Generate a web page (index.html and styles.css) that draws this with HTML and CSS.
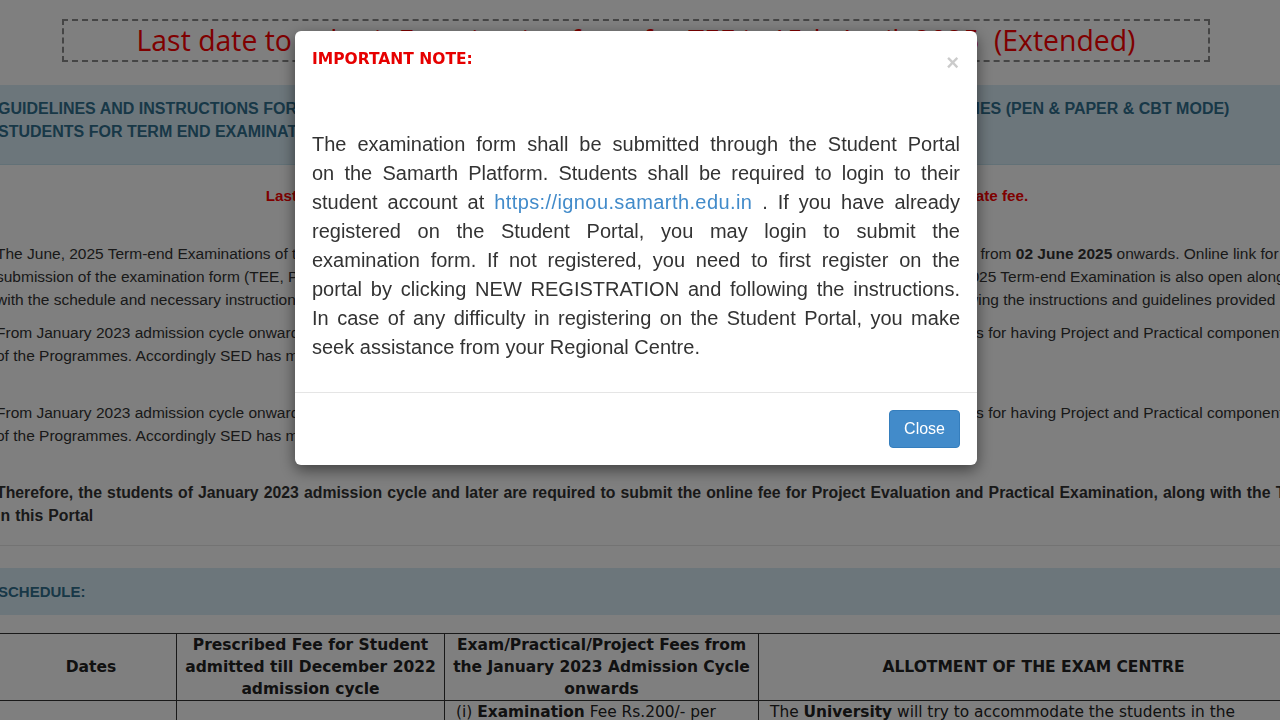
FILE: index.html
```html
<!DOCTYPE html>
<html lang="en">
<head>
<meta charset="utf-8">
<title>IGNOU Examination Form</title>
<link rel="stylesheet" href="styles.css">
</head>
<body>
<div class="page">
  <div class="banner">Last date to submit Examination form for TEE is 15th April, 2025&nbsp; (Extended)</div>

  <div class="band band-top">
    GUIDELINES AND INSTRUCTIONS FOR SUBMISSION OF ONLINE EXAMINATION FORM FOR ODL ONLINE &amp; OTHER PROGRAMMES (PEN &amp; PAPER &amp; CBT MODE)<br>
    STUDENTS FOR TERM END EXAMINATION JUNE 2025
  </div>

  <p class="late">Last date to submit the online Examination Form for the June 2025 TEE is 15th April 2025 without late fee.</p>

  <p class="para p1">The June, 2025 Term-end Examinations of the University for all ODL and Online Programmes will be conducted in Pen &amp; Paper and CBT mode from <b>02 June 2025</b> onwards. Online link for<br>
  submission of the examination form (TEE, Project and Practical Examination Fee) for all the eligible students who wish to appear in the June 2025 Term-end Examination is also open along<br>
  with the schedule and necessary instructions. Students are advised to carefully go through and submit their online examination form after following the instructions and guidelines provided</p>

  <p class="para p2">From January 2023 admission cycle onwards, the University has prescribed separate fees for Project Work and Practical for all the Programmes for having Project and Practical components<br>
  of the Programmes. Accordingly SED has made provision for submission of the fee through this portal.</p>

  <p class="para p3">From January 2023 admission cycle onwards, the University has prescribed separate fees for Project Work and Practical for all the Programmes for having Project and Practical components<br>
  of the Programmes. Accordingly SED has made provision for submission of the fee through this portal.</p>

  <p class="para p4"><b>Therefore, the students of January 2023 admission cycle and later are required to submit the online fee for Project Evaluation and Practical Examination, along with the Term-end Examination form<br>
  in this Portal</b></p>

  <hr class="rule">

  <div class="band band-schedule">SCHEDULE:</div>

  <table class="schedule">
    <colgroup>
      <col class="c1"><col class="c2"><col class="c3"><col class="c4">
    </colgroup>
    <thead>
      <tr>
        <th class="first">Dates</th>
        <th>Prescribed Fee for Student admitted till December 2022 admission cycle</th>
        <th>Exam/Practical/Project Fees from the January 2023 Admission Cycle onwards</th>
        <th>ALLOTMENT OF THE EXAM CENTRE</th>
      </tr>
    </thead>
    <tbody>
      <tr>
        <td class="mid first">02 May 2025 to 15 April 2025</td>
        <td class="mid">Rs.200/- per theory course</td>
        <td class="pad">(i) <b>Examination</b> Fee Rs.200/- per theory course<br>(ii) <b>Practical</b> Fee Rs.300/- per course<br>(iii) <b>Project</b> Fee Rs.500/- per project</td>
        <td class="pad">The <b>University</b> will try to accommodate the students in the examination centre opted by them. However, the University reserves the right to allot any other examination centre.</td>
      </tr>
    </tbody>
  </table>
</div>

<div class="backdrop"></div>

<div class="modal" role="dialog">
  <div class="modal-header">
    <h4 class="modal-title">IMPORTANT NOTE:</h4>
    <button class="close" type="button" aria-label="Close">&times;</button>
  </div>
  <div class="modal-body">
    <p>
      <span class="ln">The examination form shall be submitted through the Student Portal</span>
      <span class="ln">on the Samarth Platform. Students shall be required to login to their</span>
      <span class="ln">student account at <a href="#">https://ignou.samarth.edu.in</a> . If you have already</span>
      <span class="ln">registered on the Student Portal, you may login to submit the</span>
      <span class="ln">examination form. If not registered, you need to first register on the</span>
      <span class="ln">portal by clicking NEW REGISTRATION and following the instructions.</span>
      <span class="ln">In case of any difficulty in registering on the Student Portal, you make</span>
      <span class="ln last">seek assistance from your Regional Centre.</span>
    </p>
  </div>
  <div class="modal-footer">
    <button class="btn-primary" type="button">Close</button>
  </div>
</div>
</body>
</html>
```

FILE: styles.css
```css
html, body {
  margin: 0;
  padding: 0;
  width: 1280px;
  height: 720px;
  overflow: hidden;
  background: #ffffff;
}

body {
  font-family: "Liberation Sans", Arial, sans-serif;
  color: #333333;
}

.page {
  margin-left: -4px;
  width: 1340px;
  padding-top: 19px;
}

.banner {
  margin-left: 66px;
  width: 1144px;
  height: 39px;
  border: 2px dashed #8a8a8a;
  color: #ff0000;
  font-family: "Open Sans", "Liberation Sans", sans-serif;
  font-size: 28.4px;
  line-height: 39px;
  text-align: center;
  white-space: nowrap;
  overflow: hidden;
}

.band {
  background: #d9edf7;
  border-bottom: 1px solid #c4e3ef;
  color: #31708f;
  font-weight: bold;
  font-size: 16px;
  line-height: 23px;
  white-space: nowrap;
}

.band-top {
  margin-top: 23px;
  height: 46px;
  padding: 12px 0 21px 2px;
}

.late {
  margin: 21px 0 0;
  color: #ff0000;
  font-weight: bold;
  font-size: 15.2px;
  line-height: 20px;
  text-align: center;
  width: 1302px;
  white-space: nowrap;
}

.para {
  margin: 0;
  font-size: 15.5px;
  line-height: 23px;
  white-space: nowrap;
}

.p1 { margin-top: 36px; }
.p2 { margin-top: 10px; }
.p3 { margin-top: 34px; }
.p4 { margin-top: 34px; font-size: 15.8px; word-spacing: 0.7px; }

.rule {
  margin: 18px 0 0;
  border: 0;
  border-top: 1px solid #e6e6e6;
  height: 0;
}

.band-schedule {
  margin-top: 22px;
  height: 47px;
  line-height: 47px;
  font-size: 15px;
  padding-left: 2px;
  border-bottom: 0;
}

.schedule {
  margin-top: 18px;
  width: 1312px;
  border-collapse: collapse;
  font-family: "DejaVu Sans", Verdana, sans-serif;
  font-size: 15.4px;
  line-height: 22px;
  color: #222222;
  table-layout: fixed;
}

.c1 { width: 180px; }
.c2 { width: 268px; }
.c3 { width: 314px; }
.c4 { width: 550px; }

.schedule th,
.schedule td {
  border: 1px solid #333333;
  padding: 0 6px;
}

.schedule th {
  text-align: center;
  vertical-align: middle;
  font-weight: bold;
  font-size: 15.5px;
}

.schedule .first {
  padding-left: 15px;
}

.schedule td {
  vertical-align: top;
  padding-top: 0;
}

.schedule td.mid {
  vertical-align: middle;
  text-align: center;
}

.schedule td.pad {
  padding-left: 11px;
}

/* modal */
.backdrop {
  position: fixed;
  inset: 0;
  background: rgba(0, 0, 0, 0.5);
}

.modal {
  position: fixed;
  top: 31px;
  left: 295px;
  width: 682px;
  height: 434px;
  background: #ffffff;
  border-radius: 6px;
  box-shadow: 0 5px 15px rgba(0, 0, 0, 0.5);
  display: flex;
  flex-direction: column;
  box-sizing: border-box;
}

.modal-header {
  display: flex;
  justify-content: space-between;
  align-items: flex-start;
  padding: 18px 17px 0 17px;
}

.modal-title {
  margin: 0;
  font-family: "DejaVu Sans", Verdana, sans-serif;
  font-weight: bold;
  font-size: 15.5px;
  line-height: 21px;
  color: #e60000;
}

.close {
  margin: 6px 1px 0 0;
  padding: 0;
  border: 0;
  background: transparent;
  font-family: "Liberation Sans", Arial, sans-serif;
  font-size: 22px;
  font-weight: bold;
  line-height: 16px;
  color: #000000;
  opacity: 0.2;
  text-shadow: 0 1px 0 #ffffff;
}

.modal-body {
  padding: 59px 17px 30px 17px;
}

.modal-body p {
  margin: 0;
  font-size: 20px;
  line-height: 29px;
  color: #333333;
}

.modal-body .ln {
  display: block;
  text-align: justify;
  text-align-last: justify;
}

.modal-body .ln.last {
  text-align-last: left;
}

.modal-body a {
  color: #428bca;
  text-decoration: none;
  letter-spacing: 0.4px;
}

.modal-footer {
  border-top: 1px solid #e5e5e5;
  padding: 17px;
  display: flex;
  justify-content: flex-end;
}

.btn-primary {
  font-family: "Liberation Sans", Arial, sans-serif;
  font-size: 16px;
  line-height: 20px;
  padding: 8px 14px;
  color: #ffffff;
  background: #428bca;
  border: 1px solid #357ebd;
  border-radius: 4px;
}
```
